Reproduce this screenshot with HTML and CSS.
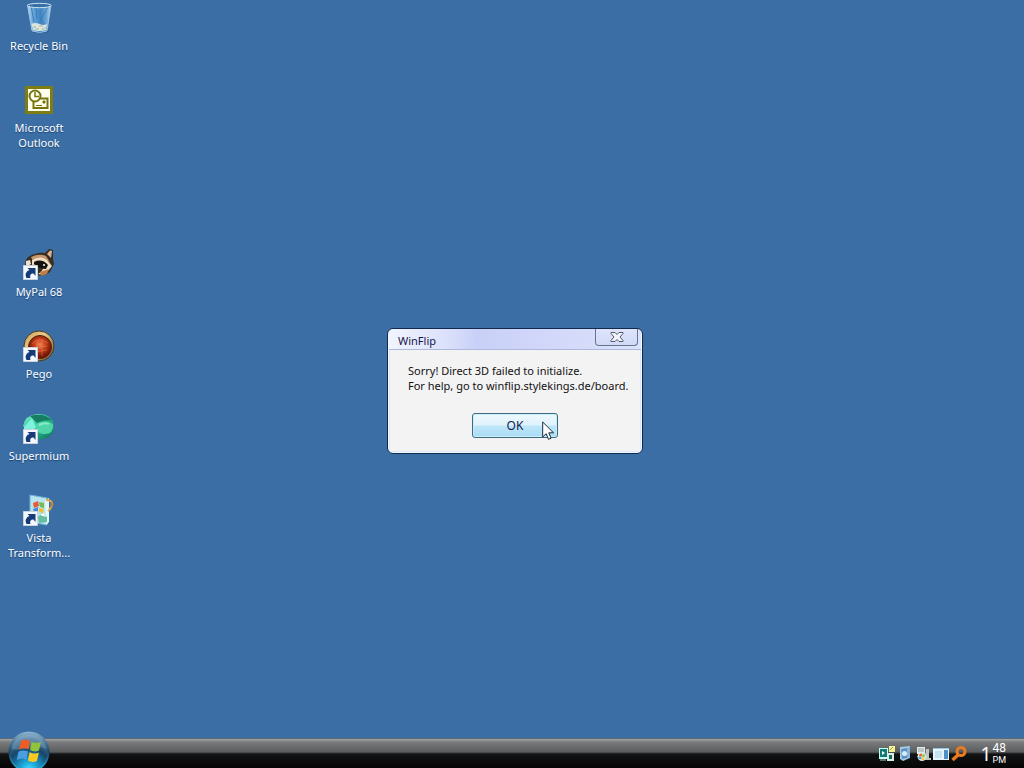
FILE: index.html
```
<!DOCTYPE html>
<html lang="en">
<head>
<meta charset="utf-8">
<title>Desktop</title>
<link rel="stylesheet" href="styles.css">
</head>
<body>
<svg class="defs" aria-hidden="true">
  <defs>
    <linearGradient id="bin" x2="1"><stop stop-color="#c3def2"/><stop offset=".2" stop-color="#6ca9dd"/><stop offset=".55" stop-color="#3f83c4"/><stop offset=".8" stop-color="#6ba4d4"/><stop offset="1" stop-color="#b5d3ea"/></linearGradient>
    <radialGradient id="copper" cx=".5" cy=".4"><stop stop-color="#f0824e"/><stop offset=".5" stop-color="#c8401c"/><stop offset="1" stop-color="#761806"/></radialGradient>
    <linearGradient id="rim" x2="1" y2="1"><stop stop-color="#c49a50"/><stop offset=".4" stop-color="#e9cf8a"/><stop offset="1" stop-color="#6a461c"/></linearGradient>
    <linearGradient id="teal" x2="1" y2="1"><stop stop-color="#7cf0cf"/><stop offset=".5" stop-color="#2dbb94"/><stop offset="1" stop-color="#0d6a52"/></linearGradient>
    <radialGradient id="orb" cx=".5" cy=".95" r="1"><stop stop-color="#3be0ff"/><stop offset=".25" stop-color="#1a9ad0"/><stop offset=".55" stop-color="#174468"/><stop offset=".8" stop-color="#4d7c9e"/><stop offset="1" stop-color="#a9c9de"/></radialGradient>
    <linearGradient id="orbrim" x2="0" y2="1"><stop stop-color="#86aecb"/><stop offset=".5" stop-color="#1c4460"/><stop offset="1" stop-color="#27b5dd"/></linearGradient>
    <g id="shortcut">
      <path d="M.5 17.500h14v14H.5z" fill="#f4f7fb" stroke="#c9d3df"/>
      <path d="M3.500 30c-2-4 0-7 3-8L4.500 20h8v8l-2-2.500c-3 0-4 2-3 4.500z" fill="#153c78"/>
    </g>
    <g id="flag">
      <path d="M2 2c3-2 6-1.500 8.500 0L9 10c-3-1.500-6-1.500-9 0z" fill="#ef5b25"/>
      <path d="M12 2.500c3 1.500 6 1.500 9 0L19 11c-3 1.500-6 1-8.500-.5z" fill="#91c43d"/>
      <path d="M-.5 12c3-1.500 6-1.500 9 0L7 20c-3-2-6-1.500-9 0z" fill="#4b9fdf"/>
      <path d="M10 12.500c3 1.500 6 1.500 9 .5L17 21c-3 1.500-6 1-8.500-.5z" fill="#fbc921"/>
    </g>
  </defs>
</svg>

<main class="desktop">
  <nav class="icons" aria-label="Desktop icons">
    <a class="icon row1" href="#">
      <svg class="pic" viewBox="0 0 32 32">
        <ellipse cx="17" cy="29" rx="9" ry="2" fill="#2b5a8b"/>
        <path d="M4.500 3 28 3 24 29q-7 3-15 0z" fill="url(#bin)" stroke="#a9cfec" stroke-width=".8"/>
        <path d="M8 4l3 16M25 5l-7 12 3 5M13 5l1 12" stroke="#316da6" fill="none" opacity=".7"/>
        <path d="M8.500 22q4-2 8 0t7.500 0l-1 6q-7 2-13 0z" fill="#dbe5d9"/>
        <path d="M10 25h3m3-1h4m1 2h2m-11 1h4m3 0h2" stroke="#a5b5ac"/>
        <ellipse cx="16.300" cy="3.500" rx="12" ry="2.200" fill="#386fa5" stroke="#cfe4f4" stroke-width="1"/>
      </svg>
      <span class="label">Recycle Bin</span>
    </a>
    <a class="icon row2" href="#">
      <svg class="pic" viewBox="0 0 32 32">
        <path d="M2 2h28v28H2z" fill="#7f7d12"/><path d="M5 5h22v22H5z" fill="#fffff0"/>
        <path d="M10.500 14.500h14V24h-14z" fill="#fffff0" stroke="#77740b" stroke-width="2"/>
        <path d="M20 17h2v2h-2zM13 21.500h6" fill="#77740b" stroke="#77740b"/>
        <circle cx="12" cy="12" r="5.500" fill="#fffff0" stroke="#77740b" stroke-width="2"/>
        <path d="M12 8v4.500h4" fill="none" stroke="#77740b" stroke-width="1.500"/>
      </svg>
      <span class="label">Microsoft Outlook</span>
    </a>
    <a class="icon row4" href="#">
      <svg class="pic" viewBox="0 0 32 32">
        <path d="M2 17q0-9 10-11 6-2 10-1l4-4 4 1v9l1 5-4 8q-6 5-13 3L3 20z" fill="#3a2c22"/>
        <path d="M24 6l3-3.500 2 .5-1 7z" fill="#d9b595"/>
        <path d="M3 13l4-1 1 4-5 3z" fill="#efe0cc"/>
        <path d="M8 9q8-4 15-1l5 8q-6-8-18-3z" fill="#c79a6e"/>
        <path d="M9 12q9-5 15 0l5 6-4 5q-4 4-10 3 5-3 5-6-4-4-11-3z" fill="#f2dfc7"/>
        <path d="M11 14q8-4 14 3l-2 4q-6 0-12-5z" fill="#16130f"/>
        <circle cx="21" cy="17" r="1" fill="#fff"/><path d="M17 24l9-3-2 5-6 2z" fill="#bd7e47"/>
        <use href="#shortcut"/>
      </svg>
      <span class="label">MyPal 68</span>
    </a>
    <a class="icon row5" href="#">
      <svg class="pic" viewBox="0 0 32 32">
        <circle cx="16" cy="16" r="15" fill="url(#rim)" stroke="#4c3a25"/>
        <circle cx="17" cy="17" r="11.500" fill="url(#copper)" stroke="#5c1c0a"/>
        <path d="M9 14q7-8 16-1M12 18l12-2M14 11v14m5-16v17M12 22l12-2" fill="none" stroke="#ef8a5b" opacity=".45"/>
        <use href="#shortcut"/>
      </svg>
      <span class="label">Pego</span>
    </a>
    <a class="icon row6" href="#">
      <svg class="pic" viewBox="0 0 32 32">
        <path d="M0 14Q2 3 14 2q11-1 16 7 3 9-2 14-7 6-15 4z" fill="url(#teal)"/>
        <path d="M7 4q13-4 22 4-9 0-15 3z" fill="#167e62"/>
        <path d="M1 15l8-9 4 9-3 4H1z" fill="#7df2dc"/>
        <path d="M13 12q9-5 17 0 1 11-10 10-8-1-7-10z" fill="#50d5a8"/>
        <path d="M16 13q6-3 10-1" fill="none" stroke="#86ecc8" stroke-width="2"/>
        <use href="#shortcut"/>
      </svg>
      <span class="label">Supermium</span>
    </a>
    <a class="icon row7" href="#">
      <svg class="pic" viewBox="0 0 32 32">
        <path d="M7 1l17 3v27L7 28z" fill="#b8e4ef" stroke="#70b4d2"/>
        <path d="M22 6l4-2v24l-3 3z" fill="#e6f8fa"/>
        <path d="M10 9l5-2 1 5-5 2z" fill="#e8593a"/><path d="M16 8l5 1v5l-4-1z" fill="#71bd53"/>
        <path d="M10 15l5-2v5l-4 1z" fill="#478bdc"/><path d="M16 14l5 1-1 4-4-1z" fill="#f2bc3b"/>
        <path d="M15 23l4-4 5 4v5l-8 1z" fill="#67bda0"/><path d="M17 21l3-2 3 4-3-1z" fill="#fff"/>
        <path d="M23 6q6 0 6 4t-4 7" fill="none" stroke="#dba750" stroke-width="2"/>
        <path d="M28 8l3 2-3 4z" fill="#cb7d3c"/>
        <use href="#shortcut"/>
      </svg>
      <span class="label">Vista Transform...</span>
    </a>
  </nav>

  <section class="window" role="dialog" aria-labelledby="title" aria-describedby="message">
    <header class="titlebar">
      <h1 class="title" id="title">WinFlip</h1>
      <button class="close" type="button" aria-label="Close">
        <svg class="cross" viewBox="0 0 14 10"><path d="M1 .5h4L7 2.500 9 .5h4v1L10 5l3 3.500v1H9l-2-2-2 2H1v-1L4 5 1 1.500z" fill="#f2f4fc" stroke="#50586c"/></svg>
      </button>
    </header>
    <div class="content">
      <p class="message" id="message">Sorry! Direct 3D failed to initialize.<br>For help, go to winflip.stylekings.de/board.</p>
      <button class="ok" type="button">OK</button>
    </div>
  </section>

  <svg class="cursor" viewBox="0 0 12 19" aria-hidden="true"><path d="M.7 1v15l3.500-3.300L6.500 18.300l2.600-1.100-2.300-5.400h4.700z" fill="#fff" stroke="#172b3c"/></svg>
</main>

<footer class="taskbar">
  <button class="start" type="button" aria-label="Start">
    <svg class="orb" viewBox="0 0 42 42">
      <circle cx="21" cy="21" r="19.500" fill="url(#orb)" stroke="url(#orbrim)" stroke-width="2"/>
      <path d="M4 18Q6 4 21 4t17 14q-7-4-17-1T4 18z" fill="#dcefff" opacity=".2"/>
      <use href="#flag" transform="translate(11 8) scale(1.050)"/>
    </svg>
  </button>
  <div class="tray">
    <svg class="trayicon" viewBox="0 0 16 16">
      <path d="M0 2h9v11H0z" fill="#c7fff2"/><path d="M1 3h7v8H1z" fill="#147a74"/><path d="M3 5l3 2-3 2z" fill="#fff"/>
      <path d="M10 0h6v6h-6z" fill="#f4f497"/><path d="M11 4l3-3" stroke="#a69c2c"/>
      <path d="M8 7h7v8H8z" fill="#d9eee5"/><path d="M10 9h3v4h-3z" fill="#176a5c"/><path d="M1 14h6" stroke="#9cd8c8"/>
    </svg>
    <svg class="trayicon" viewBox="0 0 16 16">
      <path d="M3 1l10-1v12l-7 3-3-2z" fill="#a9cbe5"/><path d="M4 3l6-1v10l-5 1z" fill="#5b92c6"/>
      <circle cx="7.500" cy="7.500" r="2.500" fill="#d7ecf9"/><path d="M10 2l3-1v10l-3 2z" fill="#88b4da"/>
    </svg>
    <svg class="trayicon" viewBox="0 0 16 16">
      <path d="M2 1h8v7H2z" fill="#e6ece9"/><path d="M3 3h6M3 5h6" stroke="#8f9fa2"/>
      <path d="M11 3h3v9h2v2h-6z" fill="#bdc5c5"/><circle cx="7" cy="10.500" r="4.500" fill="#dbe8e8"/>
      <g transform="translate(4 7.500) scale(.3)"><use href="#flag"/></g>
    </svg>
    <svg class="trayicon" viewBox="0 0 16 16">
      <path d="M0 2h16v12H0z" fill="#e7f4fb"/><path d="M0 2h16v1H0z" fill="#95c3e6"/>
      <path d="M2 5h7v7H2z" fill="#c5e1f2"/><path d="M11 4h4v9h-4z" fill="#4f8fc8"/>
    </svg>
    <svg class="trayicon" viewBox="0 0 16 16">
      <circle cx="10" cy="5.500" r="4" fill="none" stroke="#e97b20" stroke-width="3"/><path d="M7 9L1.500 14" stroke="#e97b20" stroke-width="3.500"/>
    </svg>
    <time class="clock" datetime="13:48">
      <span class="hour">1</span>
      <span class="side"><span>48</span><span class="half">PM</span></span>
    </time>
  </div>
</footer>
</body>
</html>
```
FILE: styles.css
```
* { box-sizing: border-box; }

body {
  margin: 0;
  min-height: 100vh;
  display: flex;
  flex-direction: column;
  background: #3a6ea5;
  font: 11px/15px "Noto Sans", sans-serif;
}

button { font: inherit; padding: 0; }

.defs { position: absolute; width: 0; height: 0; }

.desktop { position: relative; flex: 1; }

.icons {
  display: grid;
  grid-template-columns: 78px;
  grid-template-rows: repeat(7, 82px);
}

.icon {
  display: flex;
  flex-direction: column;
  align-items: center;
  gap: 4px;
  padding-top: 2px;
  color: #fff;
  text-align: center;
  text-decoration: none;
  text-shadow: 0 1px 1px #1d4370;
}

.row1 { grid-row: 1; }
.row2 { grid-row: 2; }
.row4 { grid-row: 4; }
.row5 { grid-row: 5; }
.row6 { grid-row: 6; }
.row7 { grid-row: 7; }

.pic { width: 32px; height: 32px; }
.label { width: 72px; }

.window {
  position: absolute;
  left: 387px;
  top: 328px;
  min-width: 256px;
  padding: 0 2px 2px;
  border: 1px solid #10294f;
  border-radius: 6px;
  background: #dbe5fb;
  box-shadow: inset 0 0 0 1px #f4f8ff;
}

.titlebar {
  display: flex;
  justify-content: space-between;
  align-items: flex-start;
  height: 21px;
  margin: 0 -1px;
  padding: 0 3px 0 9px;
  border-radius: 5px 5px 0 0;
  border-bottom: 1px solid #adb9dc;
  background: linear-gradient(90deg, #f1f4ff, #dce2fb 22%, #c9d0f7 35%, #d2d8fa 65%, #dae3fb);
}

.title {
  margin: 4px 0 0;
  color: #15154b;
  font-size: 11px;
  font-weight: 400;
  line-height: 15px;
}

.close {
  display: grid;
  place-items: center;
  width: 43px;
  height: 17px;
  border: 1px solid #69738e;
  border-top: 0;
  border-radius: 0 0 4px 4px;
  background: linear-gradient(#dde3fb, #d1daf5);
}

.cross { width: 14px; height: 10px; }

.content {
  display: flex;
  flex-direction: column;
  align-items: center;
  gap: 20px;
  padding: 13px 6px 13px 18px;
  background: #f3f3f4;
}

.message { align-self: flex-start; margin: 0; color: #111; white-space: nowrap; }

.ok {
  width: 86px;
  height: 25px;
  margin-right: 12px;
  border: 1px solid #3f6a80;
  border-radius: 3px;
  background: linear-gradient(#eef8fd, #dff2fc 48%, #bee6fa 52%, #a9dbf5);
  box-shadow: inset 0 0 0 1px #c9effb;
  color: #10204c;
  font-size: 12px;
}

.cursor { position: absolute; left: 542px; top: 421px; width: 12px; height: 19px; }

.taskbar {
  display: flex;
  justify-content: space-between;
  align-items: center;
  height: 30px;
  padding: 0 18px 0 8px;
  border-top: 1px solid #5f6a74;
  background: linear-gradient(#a3a5a7, #797b7d 3px, #5a5c5e 13px, #121314 15px, #050505);
}

.start {
  align-self: flex-end;
  width: 42px;
  height: 37px;
  overflow: hidden;
  border: 0;
  background: none;
}

.orb { display: block; width: 42px; height: 42px; }

.tray { display: flex; align-items: center; gap: 2px; }
.trayicon { width: 16px; height: 16px; }

.clock { display: flex; align-items: center; gap: 1px; margin-left: 12px; color: #fff; }
.hour { font-size: 19px; line-height: 28px; }
.side { display: flex; flex-direction: column; font: 12px/13px Roboto, sans-serif; }
.half { font-size: 9px; line-height: 11px; }
```
